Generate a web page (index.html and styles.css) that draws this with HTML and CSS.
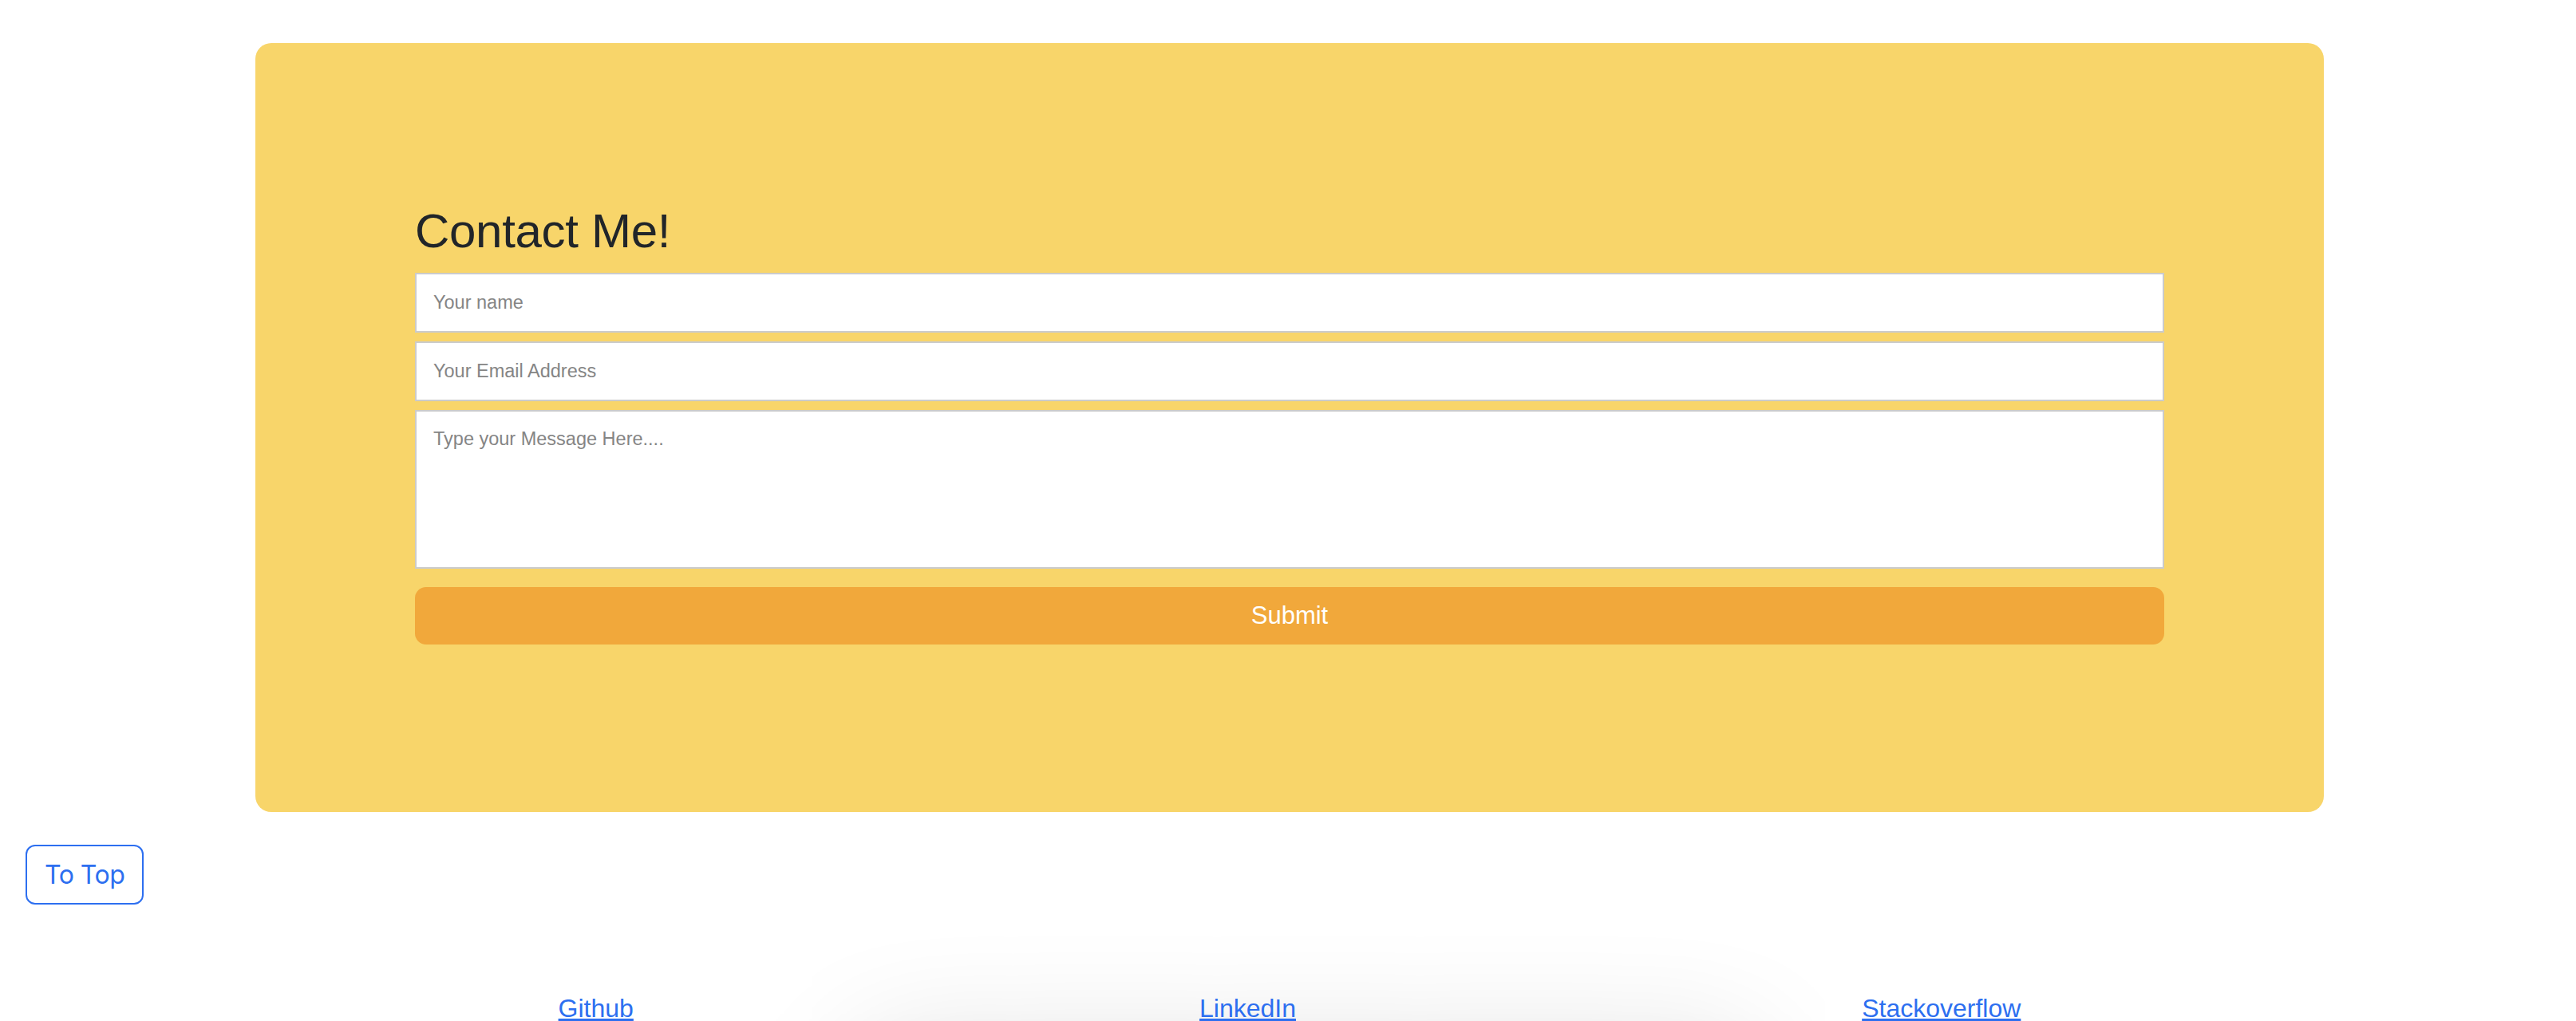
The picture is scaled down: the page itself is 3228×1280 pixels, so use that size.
FILE: index.html
```html
<!DOCTYPE html>
<html lang="en">
<head>
<meta charset="utf-8">
<title>Contact</title>
<link rel="stylesheet" href="styles.css">
</head>
<body>
<div class="page">
  <section class="contact">
    <h1 class="contact-title">Contact Me!</h1>
    <form class="contact-form">
      <input class="field" type="text" placeholder="Your name">
      <input class="field" type="email" placeholder="Your Email Address">
      <textarea class="field field-message" placeholder="Type your Message Here...."></textarea>
      <button class="submit" type="button">Submit</button>
    </form>
  </section>
  <div class="top-row">
    <a class="to-top" href="#">To Top</a>
  </div>
  <nav class="social">
    <a class="social-link" href="#">Github</a>
    <a class="social-link" href="#">LinkedIn</a>
    <a class="social-link" href="#">Stackoverflow</a>
  </nav>
  <div class="footer-panel"></div>
</div>
</body>
</html>
```
FILE: styles.css
```css
html, body {
  margin: 0;
  padding: 0;
  background: #ffffff;
}

.page {
  height: 1280px;
  overflow: hidden;
  padding-top: 54px;
  box-sizing: border-box;
  font-family: "Liberation Sans", Arial, sans-serif;
}

.contact {
  width: 2592px;
  margin: 0 0 0 320px;
  box-sizing: border-box;
  padding: 200px 200px 210px;
  background: #f8d56a;
  border-radius: 20px;
}

.contact-title {
  margin: 0 0 16px;
  font-family: "Liberation Sans", Arial, sans-serif;
  font-weight: 400;
  font-size: 60px;
  line-height: 72px;
  color: #212529;
  letter-spacing: -0.3px;
}

.contact-form {
  display: flex;
  flex-direction: column;
  gap: 11px;
  margin: 0;
}

.field {
  display: block;
  width: 100%;
  height: 75px;
  box-sizing: border-box;
  margin: 0;
  padding: 0 21px;
  border: 2px solid #cbcbcb;
  border-radius: 0;
  background: #ffffff;
  font-family: "Liberation Sans", Arial, sans-serif;
  font-size: 23.5px;
  color: #333333;
  outline: none;
}

.field::placeholder {
  color: #858585;
  opacity: 1;
}

.field-message {
  height: 199px;
  padding: 21px;
  resize: none;
}

.submit {
  display: block;
  width: 100%;
  height: 72px;
  margin-top: 12px;
  border: 0;
  border-radius: 14px;
  background: #f1a83b;
  color: #ffffff;
  font-family: "Liberation Sans", Arial, sans-serif;
  font-size: 31px;
  cursor: pointer;
}

.top-row {
  padding: 41px 0 0 32px;
}

.to-top {
  display: inline-block;
  box-sizing: border-box;
  height: 75px;
  padding: 0 22px;
  border: 2px solid #2d6ff0;
  border-radius: 12px;
  color: #2d6ff0;
  font-family: Inter, "Liberation Sans", sans-serif;
  font-size: 32px;
  line-height: 71px;
  letter-spacing: -0.5px;
  text-decoration: none;
}

.social {
  width: 2542px;
  margin: 106px 0 0 345px;
  display: flex;
  justify-content: space-around;
  line-height: 48px;
}

.social-link {
  font-family: "Liberation Sans", Arial, sans-serif;
  font-size: 32px;
  color: #2d6ff0;
  text-decoration: underline;
}

.footer-panel {
  width: 1130px;
  height: 400px;
  margin: 40px 0 0 1072px;
  border-radius: 40px;
  background: #ffffff;
  box-shadow: 0 0 160px rgba(0, 0, 0, 0.2);
}
```
